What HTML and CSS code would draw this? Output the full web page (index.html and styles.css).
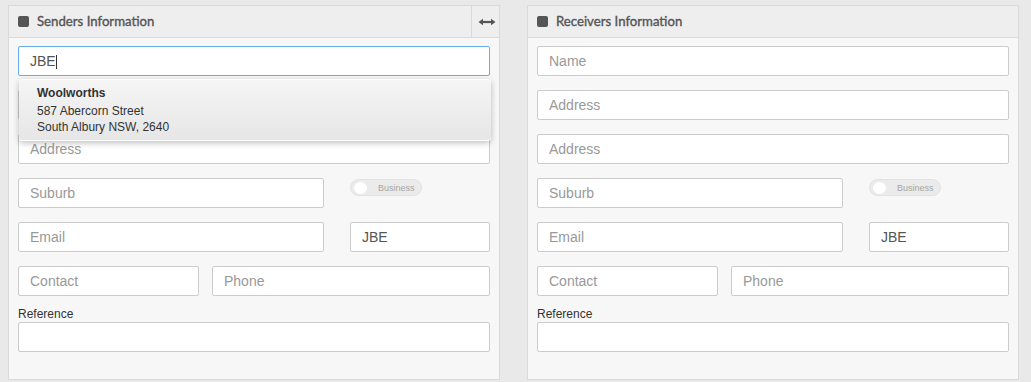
FILE: index.html
```html
<!DOCTYPE html>
<html>
<head>
<meta charset="utf-8">
<link rel="stylesheet" href="styles.css">
</head>
<body>
<div class="page">
  <section class="panel">
    <header class="panel-head">
      <span class="sq"></span>
      <span class="title">Senders Information</span>
      <button class="expand" aria-label="expand">
        <svg width="18" height="8" viewBox="0 0 18 8"><path d="M4 4H14" stroke="#555" stroke-width="2.2"/><path d="M0.5 4L5 0.8V7.2Z M17.5 4L13 0.8V7.2Z" fill="#555"/></svg>
      </button>
    </header>
    <div class="panel-body">
      <div class="field-wrap">
        <input class="in focus" type="text" value="JBE">
        <span class="caret"></span>
        <div class="suggest">
          <div class="s-name">Woolworths</div>
          <div>587 Abercorn Street</div>
          <div>South Albury NSW, 2640</div>
        </div>
      </div>
      <input class="in" type="text" placeholder="Address">
      <input class="in" type="text" placeholder="Address">
      <div class="row r-suburb">
        <input class="in" type="text" placeholder="Suburb">
        <div class="toggle"><span class="knob"></span><span class="tlabel">Business</span></div>
      </div>
      <div class="row r-suburb">
        <input class="in" type="text" placeholder="Email">
        <input class="in" type="text" value="JBE">
      </div>
      <div class="row r-contact">
        <input class="in" type="text" placeholder="Contact">
        <input class="in" type="text" placeholder="Phone">
      </div>
      <div class="ref">
        <label class="lbl">Reference</label>
        <input class="in" type="text">
      </div>
    </div>
  </section>

  <section class="panel">
    <header class="panel-head">
      <span class="sq"></span>
      <span class="title">Receivers Information</span>
    </header>
    <div class="panel-body">
      <input class="in" type="text" placeholder="Name">
      <input class="in" type="text" placeholder="Address">
      <input class="in" type="text" placeholder="Address">
      <div class="row r-suburb">
        <input class="in" type="text" placeholder="Suburb">
        <div class="toggle"><span class="knob"></span><span class="tlabel">Business</span></div>
      </div>
      <div class="row r-suburb">
        <input class="in" type="text" placeholder="Email">
        <input class="in" type="text" value="JBE">
      </div>
      <div class="row r-contact">
        <input class="in" type="text" placeholder="Contact">
        <input class="in" type="text" placeholder="Phone">
      </div>
      <div class="ref">
        <label class="lbl">Reference</label>
        <input class="in" type="text">
      </div>
    </div>
  </section>
</div>
</body>
</html>
```

FILE: styles.css
```css
* { box-sizing: border-box; }
html, body { margin: 0; padding: 0; }
body {
  background: #e9e9e9;
  font-family: "Liberation Sans", Arial, sans-serif;
  color: #555;
  width: 1031px;
  height: 382px;
  overflow: hidden;
}
.page {
  display: flex;
  gap: 27px;
  padding: 5px 12px 0 8px;
}
.panel {
  width: 492px;
  height: 375px;
  border: 1px solid #dadada;
  background: #f7f7f7;
  display: flex;
  flex-direction: column;
}
.panel-head {
  height: 32px;
  background: #eeeeee;
  border-bottom: 1px solid #dadada;
  display: flex;
  align-items: center;
  padding-left: 9px;
}
.sq {
  width: 11px;
  height: 11px;
  border-radius: 2px;
  background: #555;
  margin-right: 8px;
  margin-bottom: 1px;
}
.title {
  font-family: Lato, "Open Sans", sans-serif;
  font-weight: normal;
  -webkit-text-stroke: 0.35px #555;
  font-size: 13.2px;
  color: #555;
  flex: 1;
  padding-bottom: 2px;
}
.expand {
  width: 28px;
  height: 31px;
  border: 0;
  border-left: 1px solid #dadada;
  background: transparent;
  padding: 0 0 0 2px;
  display: flex;
  align-items: center;
  justify-content: center;
}
.panel-body {
  padding: 8px 9px 0 9px;
  display: flex;
  flex-direction: column;
  gap: 14px;
}
.field-wrap { position: relative; }
.caret {
  position: absolute;
  left: 38px;
  top: 9px;
  width: 1px;
  height: 14px;
  background: #333;
}
.in {
  display: block;
  width: 100%;
  height: 30px;
  border: 1px solid #cccccc;
  border-radius: 2px;
  background: #fff;
  padding: 0 11px;
  font-family: "Liberation Sans", Arial, sans-serif;
  font-size: 14px;
  color: #555;
  outline: none;
}
.in::placeholder { color: #999; }
.in.focus { border-color: #66afe9; }
.row { display: grid; align-items: start; }
.r-suburb { grid-template-columns: 306px 140px; column-gap: 26px; }
.r-contact { grid-template-columns: 181px 278px; column-gap: 13px; }
.toggle {
  width: 72px;
  height: 17px;
  margin-top: 1px;
  border-radius: 9px;
  background: #ebebeb;
  border: 1px solid #e2e2e2;
  display: flex;
  align-items: center;
  padding-left: 3px;
}
.knob {
  width: 13px;
  height: 12px;
  border-radius: 50%;
  background: #fff;
}
.tlabel {
  font-size: 9px;
  color: #a5a5a5;
  margin-left: 11px;
}
.ref { display: flex; flex-direction: column; margin-top: -4px; }
.lbl {
  font-size: 12px;
  line-height: 16px;
  color: #333;
}
.suggest {
  position: absolute;
  left: 1px;
  top: 33px;
  width: 472px;
  height: 62px;
  padding: 5px 18px 0;
  border-radius: 4px;
  background: linear-gradient(#f5f5f5, #e6e6e6);
  border-top: 1px solid #fff;
  border-bottom: 1px solid #fff;
  box-shadow: 0 2px 6px rgba(0,0,0,0.25);
  font-size: 12px;
  line-height: 16px;
  color: #333;
  z-index: 5;
}
.s-name { font-weight: bold; margin-bottom: 2px; }
```
